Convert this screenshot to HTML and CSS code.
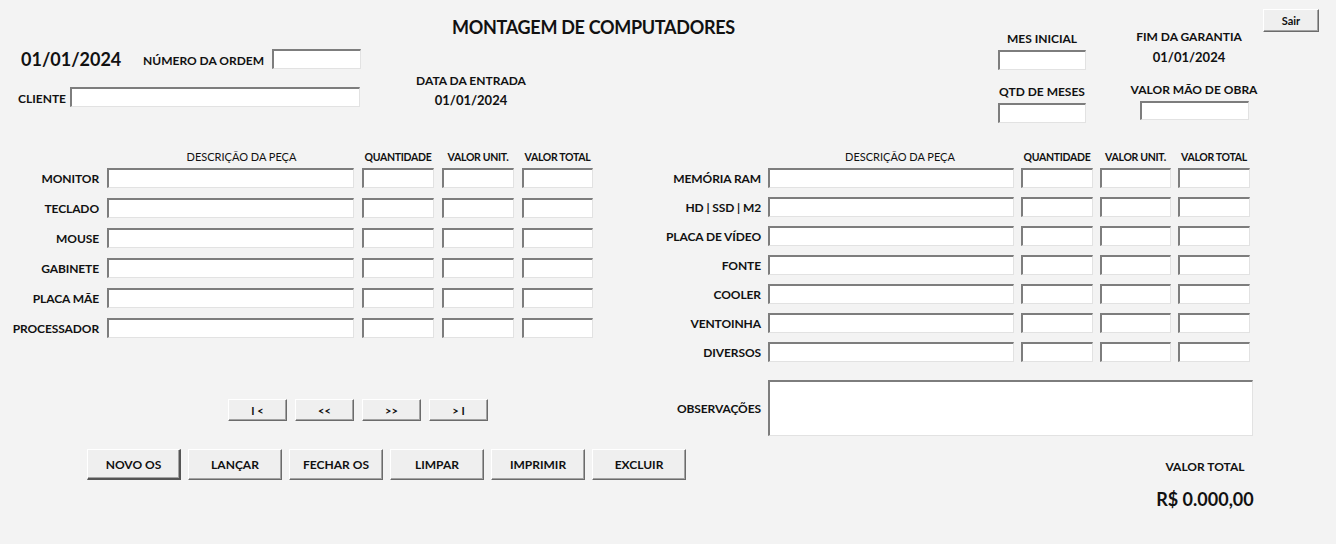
FILE: index.html
```html
<!DOCTYPE html>
<html lang="pt-BR">
<head>
<meta charset="utf-8">
<title>Montagem de Computadores</title>
<link rel="stylesheet" href="styles.css">
</head>
<body>
<div class="form">
  <header class="top">
    <div class="top-left">
      <div class="row-ordem">
        <span class="big-date">01/01/2024</span>
        <span class="lbl lbl-ordem">NÚMERO DA ORDEM</span>
        <span class="tb tb-ordem"></span>
      </div>
      <div class="row-cliente">
        <span class="lbl lbl-cliente">CLIENTE</span>
        <span class="tb tb-cliente"></span>
      </div>
    </div>
    <div class="top-center">
      <h1 class="title">MONTAGEM DE COMPUTADORES</h1>
      <div class="entrada">
        <span class="lbl">DATA DA ENTRADA</span>
        <span class="small-date">01/01/2024</span>
      </div>
    </div>
    <div class="top-right">
      <div class="col-meses">
        <span class="lbl">MES INICIAL</span>
        <span class="tb tb-mes"></span>
        <span class="lbl lbl-qtd">QTD DE MESES</span>
        <span class="tb tb-mes"></span>
      </div>
      <div class="col-garantia">
        <span class="lbl shift-left">FIM DA GARANTIA</span>
        <span class="small-date shift-left">01/01/2024</span>
        <span class="lbl lbl-obra">VALOR MÃO DE OBRA</span>
        <span class="tb tb-obra"></span>
      </div>
      <button class="btn btn-sair">Sair</button>
    </div>
  </header>

  <main class="middle">
    <section class="panel panel-left">
      <div class="thead grid-left">
        <span></span>
        <span class="th th-desc">DESCRIÇÃO DA PEÇA</span>
        <span class="th">QUANTIDADE</span>
        <span class="th">VALOR UNIT.</span>
        <span class="th">VALOR TOTAL</span>
      </div>
      <div class="tbody grid-left">
        <span class="rl">MONITOR</span><span class="tb"></span><span class="tb"></span><span class="tb"></span><span class="tb"></span>
        <span class="rl">TECLADO</span><span class="tb"></span><span class="tb"></span><span class="tb"></span><span class="tb"></span>
        <span class="rl">MOUSE</span><span class="tb"></span><span class="tb"></span><span class="tb"></span><span class="tb"></span>
        <span class="rl">GABINETE</span><span class="tb"></span><span class="tb"></span><span class="tb"></span><span class="tb"></span>
        <span class="rl">PLACA MÃE</span><span class="tb"></span><span class="tb"></span><span class="tb"></span><span class="tb"></span>
        <span class="rl">PROCESSADOR</span><span class="tb"></span><span class="tb"></span><span class="tb"></span><span class="tb"></span>
      </div>
      <nav class="nav">
        <button class="btn btn-nav">I &lt;</button>
        <button class="btn btn-nav">&lt;&lt;</button>
        <button class="btn btn-nav">&gt;&gt;</button>
        <button class="btn btn-nav">&gt; I</button>
      </nav>
      <div class="actions">
        <button class="btn btn-act btn-default">NOVO OS</button>
        <button class="btn btn-act">LANÇAR</button>
        <button class="btn btn-act">FECHAR OS</button>
        <button class="btn btn-act">LIMPAR</button>
        <button class="btn btn-act">IMPRIMIR</button>
        <button class="btn btn-act">EXCLUIR</button>
      </div>
    </section>

    <section class="panel panel-right">
      <div class="thead grid-right">
        <span></span>
        <span class="th th-desc">DESCRIÇÃO DA PEÇA</span>
        <span class="th">QUANTIDADE</span>
        <span class="th">VALOR UNIT.</span>
        <span class="th">VALOR TOTAL</span>
      </div>
      <div class="tbody tbody-right grid-right">
        <span class="rl">MEMÓRIA RAM</span><span class="tb"></span><span class="tb"></span><span class="tb"></span><span class="tb"></span>
        <span class="rl">HD | SSD | M2</span><span class="tb"></span><span class="tb"></span><span class="tb"></span><span class="tb"></span>
        <span class="rl">PLACA DE VÍDEO</span><span class="tb"></span><span class="tb"></span><span class="tb"></span><span class="tb"></span>
        <span class="rl">FONTE</span><span class="tb"></span><span class="tb"></span><span class="tb"></span><span class="tb"></span>
        <span class="rl">COOLER</span><span class="tb"></span><span class="tb"></span><span class="tb"></span><span class="tb"></span>
        <span class="rl">VENTOINHA</span><span class="tb"></span><span class="tb"></span><span class="tb"></span><span class="tb"></span>
        <span class="rl">DIVERSOS</span><span class="tb"></span><span class="tb"></span><span class="tb"></span><span class="tb"></span>
      </div>
      <div class="obs grid-right">
        <span class="rl">OBSERVAÇÕES</span>
        <span class="tb tb-obs"></span>
      </div>
      <div class="total">
        <span class="lbl">VALOR TOTAL</span>
        <span class="total-value">R$ 0.000,00</span>
      </div>
    </section>
  </main>
</div>
</body>
</html>
```

FILE: styles.css
```css
* { box-sizing: border-box; }

html, body {
  margin: 0;
  padding: 0;
  background: #f3f3f3;
}

.form {
  width: 1336px;
  height: 544px;
  overflow: hidden;
  background: #f3f3f3;
  color: #111111;
  font-family: Lato, "Liberation Sans", sans-serif;
  font-weight: 700;
  font-size: 12px;
}

.lbl {
  display: block;
  font-size: 12px;
  line-height: 16px;
  white-space: nowrap;
}

/* sunken text box */
.tb {
  display: block;
  height: 20px;
  background: #ffffff;
  border-style: solid;
  border-width: 2px 1px 1px 2px;
  border-color: #7d7d7d #e2e2e2 #e2e2e2 #7d7d7d;
}

/* raised button */
.btn {
  display: block;
  flex: none;
  margin: 0;
  padding: 0;
  font-family: Lato, "Liberation Sans", sans-serif;
  font-weight: 700;
  font-size: 12px;
  color: #111111;
  background: #efefef;
  border-style: solid;
  border-width: 1px;
  border-color: #ffffff #6b6b6b #6b6b6b #ffffff;
  box-shadow: inset -1px -1px 0 #a3a3a3;
}

/* ---------- top ---------- */
.top {
  display: grid;
  grid-template-columns: 400px 560px 376px;
  height: 146px;
}

.top-left {
  padding: 49px 0 0 18px;
}

.row-ordem {
  display: flex;
  align-items: center;
  height: 20px;
}

.big-date {
  width: 125px;
  padding-left: 3px;
  font-size: 18px;
  line-height: 20px;
}

.lbl-ordem {
  width: 129px;
  line-height: 20px;
  padding-top: 3px;
}

.tb-ordem { width: 89px; }

.row-cliente {
  display: flex;
  align-items: center;
  height: 20px;
  margin-top: 18px;
}

.lbl-cliente {
  width: 52px;
  line-height: 20px;
  padding-top: 3px;
}

.tb-cliente { width: 290px; }

.top-center {
  padding-top: 16px;
}

.title {
  margin: 0 0 0 52px;
  font-size: 18px;
  line-height: 22px;
  font-weight: 700;
  letter-spacing: -0.3px;
}

.entrada {
  display: flex;
  flex-direction: column;
  align-items: center;
  width: 112px;
  margin: 35px 0 0 15px;
}

.small-date {
  display: block;
  font-size: 13px;
  line-height: 16px;
  margin-top: 3px;
}

.top-right {
  display: flex;
  align-items: flex-start;
}

.col-meses {
  display: flex;
  flex-direction: column;
  align-items: center;
  width: 88px;
  margin-left: 38px;
  padding-top: 31px;
}

.tb-mes {
  width: 88px;
  margin-top: 3px;
}

.lbl-qtd { margin-top: 14px; }

.col-garantia {
  display: flex;
  flex-direction: column;
  align-items: center;
  width: 120px;
  margin-left: 48px;
  padding-top: 29px;
}

.col-garantia .small-date { margin-top: 4px; }

.shift-left { margin-right: 10px; }

.lbl-obra { margin-top: 17px; }

.tb-obra {
  width: 109px;
  height: 19px;
  margin-top: 3px;
}

.btn-sair {
  width: 56px;
  height: 23px;
  margin: 9px 0 0 9px;
  font-size: 11px;
}

/* ---------- middle ---------- */
.middle {
  display: flex;
}

.panel-left { width: 640px; flex: none; }
.panel-right { width: 696px; flex: none; }

.grid-left {
  display: grid;
  grid-template-columns: 99px 247px 72px 72px 71px;
  column-gap: 8px;
}

.grid-right {
  display: grid;
  grid-template-columns: 121px 246px 72px 71px 72px;
  column-gap: 7px;
}

.thead {
  height: 22px;
  align-items: center;
}

.th {
  display: block;
  text-align: center;
  font-size: 10.5px;
  line-height: 12px;
  white-space: nowrap;
  letter-spacing: -0.3px;
}

.th-desc {
  font-size: 11px;
  font-weight: 400;
  letter-spacing: 0;
  padding-left: 22px;
}

.grid-right .th-desc { padding-left: 18px; }

.tbody {
  row-gap: 10px;
  grid-auto-rows: 20px;
  align-items: center;
}

.tbody-right { row-gap: 9px; }

.rl {
  display: block;
  text-align: right;
  font-size: 12px;
  line-height: 16px;
  white-space: nowrap;
  padding-top: 2px;
  letter-spacing: -0.1px;
}

.nav {
  display: flex;
  gap: 8px;
  margin: 61px 0 0 228px;
}

.btn-nav {
  width: 59px;
  height: 22px;
  font-size: 11px;
}

.actions {
  display: flex;
  gap: 7px;
  width: 620px;
  margin: 28px 0 0 87px;
}

.btn-act {
  width: 94px;
  height: 31px;
  font-size: 12px;
}

.btn-default {
  border-color: #ffffff #555555 #555555 #ffffff;
  border-width: 1px 2px 2px 1px;
}

.obs {
  margin-top: 18px;
  align-items: center;
}

.tb-obs {
  grid-column: 2 / span 4;
  width: 485px;
  height: 56px;
}

.total {
  display: flex;
  flex-direction: column;
  align-items: center;
  width: 120px;
  margin: 23px 0 0 505px;
}

.total-value {
  display: block;
  font-size: 18px;
  line-height: 24px;
  margin-top: 12px;
}
```
